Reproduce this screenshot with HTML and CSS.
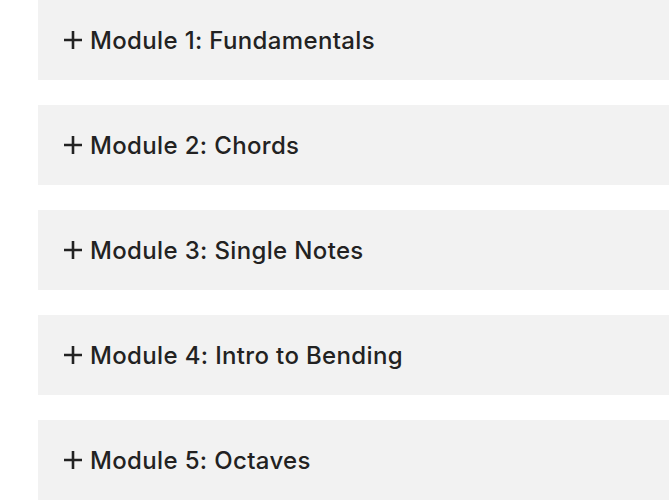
FILE: index.html
```html
<!DOCTYPE html>
<html>
<head>
<meta charset="utf-8">
<link rel="stylesheet" href="styles.css">
</head>
<body>
<div class="list">
  <div class="item"><svg class="plus" viewBox="0 0 18 18"><path d="M9 0V18M0 9H18"/></svg><span class="title">Module 1: Fundamentals</span></div>
  <div class="item"><svg class="plus" viewBox="0 0 18 18"><path d="M9 0V18M0 9H18"/></svg><span class="title">Module 2: Chords</span></div>
  <div class="item"><svg class="plus" viewBox="0 0 18 18"><path d="M9 0V18M0 9H18"/></svg><span class="title">Module 3: Single Notes</span></div>
  <div class="item"><svg class="plus" viewBox="0 0 18 18"><path d="M9 0V18M0 9H18"/></svg><span class="title">Module 4: Intro to Bending</span></div>
  <div class="item"><svg class="plus" viewBox="0 0 18 18"><path d="M9 0V18M0 9H18"/></svg><span class="title">Module 5: Octaves</span></div>
</div>
</body>
</html>
```
FILE: styles.css
```css
html, body {
  margin: 0;
  padding: 0;
  background: #ffffff;
  overflow: hidden;
}
.list {
  display: flex;
  flex-direction: column;
  gap: 25px;
  padding-left: 38px;
  width: 631px;
}
.item {
  height: 80px;
  background: #f2f2f2;
  display: flex;
  align-items: center;
  padding-left: 26px;
  font-family: "Inter", sans-serif;
  font-weight: 470;
  font-size: 24px;
  color: #222222;
}
.plus {
  width: 18px;
  height: 18px;
  margin-right: 8px;
  stroke: #222222;
  stroke-width: 2.6;
  fill: none;
  flex: none;
}
.title {
  line-height: 1;
  padding-top: 2px;
  letter-spacing: 0.35px;
}
```
